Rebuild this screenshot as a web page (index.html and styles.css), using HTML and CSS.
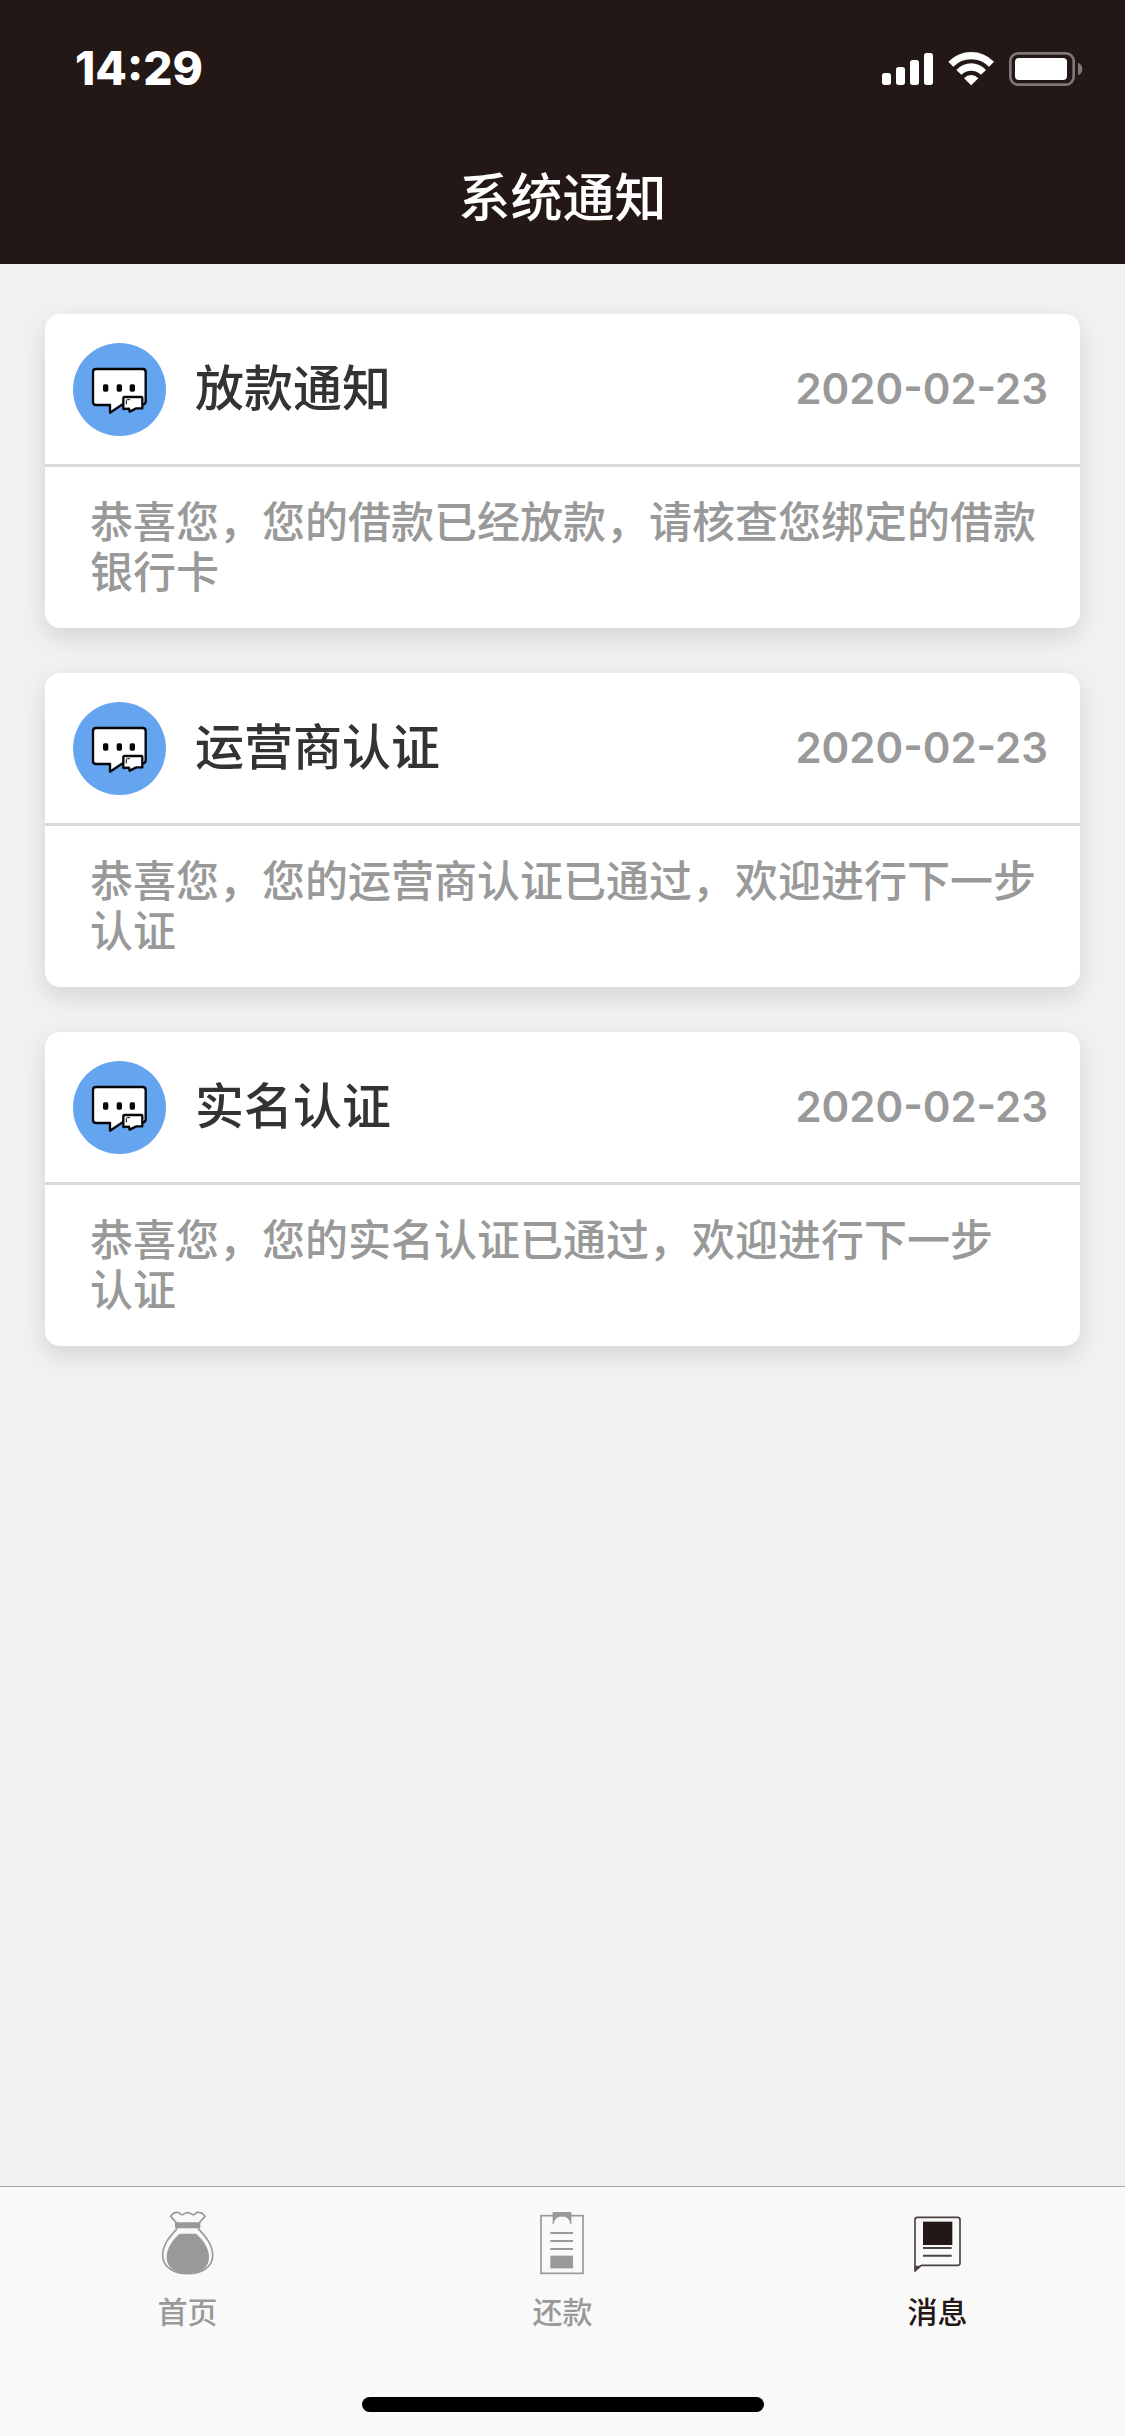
FILE: index.html
```html
<!DOCTYPE html>
<html lang="zh-CN">
<head>
<meta charset="utf-8">
<meta name="viewport" content="width=device-width, initial-scale=1">
<title>系统通知</title>
<link rel="stylesheet" href="styles.css">
</head>
<body>
<svg class="sprite" aria-hidden="true">
  <symbol id="chat" viewBox="39 69 279 279">
    <circle cx="178.500" cy="208.500" r="139.500" fill="#65a5ef"/>
    <path d="M108 147H248Q257 147 257 156V244Q257 253 248 253H188L150 278V255H108Q99 255 99 246V156Q99 147 108 147Z" fill="#fff" stroke="#05070c" stroke-width="7" stroke-linejoin="round"/>
    <rect x="129" y="193" width="16" height="22" rx="5" fill="#05070c"/>
    <rect x="170" y="193" width="16" height="22" rx="5" fill="#05070c"/>
    <rect x="209" y="193" width="16" height="22" rx="5" fill="#05070c"/>
    <path d="M193 231H244Q247 231 247 234V265H229L209 275L207 266L190 267V234Q190 231 193 231Z" fill="#fff" stroke="#05070c" stroke-width="7" stroke-linejoin="round"/>
    <path d="M199 253V242Q199 239 202 239H210" fill="none" stroke="#05070c" stroke-width="3"/>
  </symbol>
</svg>
<header class="top">
  <div class="status">
    <span class="time">14:29</span>
    <svg class="signals" viewBox="96 60 603 108" aria-hidden="true">
      <g fill="#fff">
        <rect x="96" y="129" width="27" height="36" rx="8"/>
        <rect x="138" y="111" width="27" height="54" rx="8"/>
        <rect x="180" y="90" width="27" height="75" rx="8"/>
        <rect x="222" y="69" width="27" height="96" rx="8"/>
        <path d="M295 95Q324 66 363.500 66T432 95L417 110Q394 88 363.500 88T310 110Z"/>
        <path d="M319 120Q338 100 363.500 100T408 120L393 134Q380 122 363.500 122T334 134Z"/>
        <path d="M342 145Q352 135 363.500 135T385 145L363.500 166Z"/>
        <rect x="495" y="84" width="156" height="66" rx="12"/>
      </g>
      <rect x="481" y="70" width="190" height="94" rx="23" fill="none" stroke="#7f7876" stroke-width="8"/>
      <path d="M684 98Q697 103 697 117T684 136Z" fill="#7f7876"/>
    </svg>
  </div>
  <h1 class="title">系统通知</h1>
</header>

<main class="list">
  <article class="card">
    <header class="card-head">
      <svg class="avatar" aria-hidden="true"><use href="#chat"/></svg>
      <h2 class="card-title">放款通知</h2>
      <time class="date" datetime="2020-02-23">2020-02-23</time>
    </header>
    <p class="card-text">恭喜您，您的借款已经放款，请核查您绑定的借款银行卡</p>
  </article>
  <article class="card">
    <header class="card-head">
      <svg class="avatar" aria-hidden="true"><use href="#chat"/></svg>
      <h2 class="card-title">运营商认证</h2>
      <time class="date" datetime="2020-02-23">2020-02-23</time>
    </header>
    <p class="card-text">恭喜您，您的运营商认证已通过，欢迎进行下一步<span class="word">认证</span></p>
  </article>
  <article class="card">
    <header class="card-head">
      <svg class="avatar" aria-hidden="true"><use href="#chat"/></svg>
      <h2 class="card-title">实名认证</h2>
      <time class="date" datetime="2020-02-23">2020-02-23</time>
    </header>
    <p class="card-text">恭喜您，您的实名认证已通过，欢迎进行下一步<span class="word">认证</span></p>
  </article>
</main>

<footer class="bottom">
  <nav class="tabs">
    <a class="tab" href="#home">
      <svg class="tab-icon" viewBox="60 90 165 195" aria-hidden="true">
        <path d="M109 128L92 109Q102 94 117 98Q124 107 130 103Q143 93 156 103Q163 107 169 98Q185 94 195 109L178 128M112 145C91 168 68 192 68 226C68 264 105 281 143 281S218 264 218 226C218 192 195 168 174 145" fill="none" stroke="#999" stroke-width="5"/>
        <rect x="105" y="127" width="76" height="18" rx="3" fill="#999"/>
        <path d="M119 161H168C190 180 207 204 207 232C207 268 174 280 143 280S80 268 80 232C80 204 97 180 119 161Z" fill="#999"/>
      </svg>
      <span class="tab-label">首页</span>
    </a>
    <a class="tab" href="#repay">
      <svg class="tab-icon" viewBox="75 90 165 195" aria-hidden="true">
        <rect x="93" y="107" width="126" height="173" fill="none" stroke="#999" stroke-width="5"/>
        <path d="M128 96H184V133H181Q178 110 156 109Q134 110 131 133H128Z" fill="#999"/>
        <path d="M121 159H189M121 183H189M121 207H189" stroke="#999" stroke-width="6"/>
        <rect x="121" y="227" width="68" height="38" fill="#999"/>
      </svg>
      <span class="tab-label">还款</span>
    </a>
    <a class="tab tab-current" href="#messages" aria-current="page">
      <svg class="tab-icon" viewBox="75 90 165 195" aria-hidden="true">
        <path d="M97 112H218Q225 112 225 119V249Q225 256 218 256H109L90 273V119Q90 112 97 112Z" fill="none" stroke="#4a4341" stroke-width="5" stroke-linejoin="round"/>
        <path d="M89 257H107L89 277Z" fill="#4a4341"/>
        <rect x="114" y="125" width="88" height="70" fill="#231815"/>
        <path d="M114 204H200M114 227H200" stroke="#4a4341" stroke-width="6"/>
      </svg>
      <span class="tab-label">消息</span>
    </a>
  </nav>
  <div class="home-bar"></div>
</footer>
</body>
</html>
```

FILE: styles.css
```css
* {
  box-sizing: border-box;
}

body {
  display: flex;
  flex-direction: column;
  min-height: 100vh;
  margin: 0;
  background: #f1f1f1;
  font-family: Inter, "Noto Sans CJK SC", sans-serif;
  font-weight: 500;
}

h1,
h2,
p {
  margin: 0;
}

.sprite {
  display: none;
}

.top {
  background: #231815;
  color: #fff;
}

.status {
  display: flex;
  align-items: center;
  justify-content: space-between;
  height: 132px;
  padding: 4px 42px 0 75px;
}

.time {
  font-size: 46px;
  font-weight: 800;
}

.signals {
  width: 201px;
  height: 36px;
}

.title {
  height: 132px;
  font-size: 52px;
  font-weight: 500;
  line-height: 134px;
  text-align: center;
}

.list {
  display: flex;
  flex: 1;
  flex-direction: column;
  gap: 45px;
  padding: 50px 45px;
}

.card {
  border-radius: 15px;
  background: #fff;
  box-shadow: 0 9px 24px rgba(0, 0, 0, 0.12);
}

.card-head {
  display: flex;
  align-items: center;
  height: 153px;
  padding: 0 32px 0 28px;
  border-bottom: 3px solid #d9d9d9;
}

.avatar {
  width: 93px;
  height: 93px;
}

.card-title {
  flex: 1;
  margin-left: 29px;
  color: #333;
  font-size: 49px;
  font-weight: 500;
  line-height: 50px;
}

.date {
  color: #999;
  font-size: 42px;
  font-weight: 600;
  line-height: 50px;
}

.card-text {
  padding: 30px 36px 31px 45px;
  color: #999;
  font-size: 43px;
  line-height: 50px;
}

.word {
  white-space: nowrap;
}

.bottom {
  border-top: 1px solid #a8a8a8;
  background: #f9f9f9;
}

.tabs {
  display: grid;
  grid-template-columns: repeat(3, 1fr);
}

.tab {
  display: flex;
  flex-direction: column;
  align-items: center;
  gap: 19px;
  padding-top: 23px;
  color: #999;
  text-decoration: none;
}

.tab-current {
  color: #231815;
}

.tab-icon {
  width: 55px;
  height: 65px;
}

.tab-label {
  font-size: 30px;
  line-height: 36px;
}

.home-bar {
  width: 402px;
  height: 15px;
  margin: 67px auto 24px;
  border-radius: 8px;
  background: #000;
}
```
